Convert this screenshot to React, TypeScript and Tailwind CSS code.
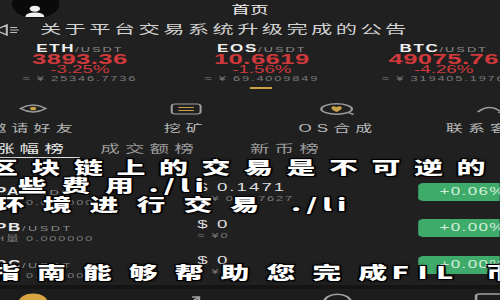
import React from "react";

const tickers = [
  { sym: "ETH", price: "3893.36", pct: "-3.25%", cny: "≈ ¥ 25346.7736" },
  { sym: "EOS", price: "10.6619", pct: "-1.56%", cny: "≈ ¥ 69.4009849" },
  { sym: "BTC", price: "49075.76", pct: "-4.26%", cny: "≈ ¥ 319405.1976" },
];

const rows = [
  { sym: "PA", vol: "H量 0.000000", price: "$ 0.1471", cny: "≈ ¥ 0.957627", chg: "+0.06%" },
  { sym: "PB", vol: "H量 0.000000", price: "$ 0", cny: "≈ ¥0", chg: "+0.00%" },
  { sym: "PC", vol: "H量 0.000000", price: "$ 0", cny: "≈ ¥0", chg: "+0.00%" },
];

function InviteIcon() {
  return (
    <svg width="17" height="11" viewBox="0 0 17 11">
      <path d="M1 5.5 Q8.5 -1.5 16 5.5 Q8.5 12.5 1 5.5 Z" fill="none" stroke="#9a9a9a" strokeWidth="1.2" />
      <circle cx="8.5" cy="5.5" r="1.8" fill="#c9a24a" />
    </svg>
  );
}

function MineIcon() {
  return (
    <svg width="19" height="12" viewBox="0 0 19 12">
      <rect x="1" y="1" width="17" height="10" rx="2" fill="none" stroke="#a0a0a0" strokeWidth="1.2" />
      <path d="M5 4.5h9M5 7.5h9" stroke="#c9a24a" strokeWidth="1.2" />
    </svg>
  );
}

function OsIcon() {
  return (
    <svg width="22" height="12" viewBox="0 0 22 12">
      <ellipse cx="10" cy="6" rx="9" ry="5.2" fill="none" stroke="#9a9a9a" strokeWidth="1.4" />
      <path d="M17 9.5l3 2" stroke="#9a9a9a" strokeWidth="1.4" />
      <path
        d="M10 9C6 6.5 6.5 3 8.4 3.2C9.3 3.3 10 4.2 10 4.2C10 4.2 10.7 3.3 11.6 3.2C13.5 3 14 6.5 10 9Z"
        fill="#c9a24a"
      />
    </svg>
  );
}

function ContactIcon() {
  return (
    <svg width="20" height="12" viewBox="0 0 20 12">
      <path d="M3 9Q10 0 17 9" fill="none" stroke="#9a9a9a" strokeWidth="1.3" />
      <path d="M15 9l2.5 1.5" stroke="#9a9a9a" strokeWidth="1.3" />
    </svg>
  );
}

const menu = [
  { label: "邀请好友", icon: <InviteIcon /> },
  { label: "挖矿", icon: <MineIcon /> },
  { label: "OS合成", icon: <OsIcon /> },
  { label: "联系客服", icon: <ContactIcon /> },
];

export default function App() {
  return (
    <div className="h-[300px] w-[500px] overflow-hidden bg-[#202020]">
      <div className="relative h-[300px] w-[294px] origin-top-left overflow-hidden font-['Liberation_Sans','Noto_Sans_CJK_SC',sans-serif] [transform:scaleX(1.7)]">
        {/* header */}
        <div className="grid h-[20px] grid-cols-[1fr_auto_1fr] items-start overflow-hidden">
          <div className="-mt-[10px] ml-[6.5px] flex h-[28px] w-[28px] items-end justify-center rounded-full bg-[#0a0a0a] pb-[1px]">
            <svg width="13" height="12" viewBox="0 0 14 13">
              <circle cx="7" cy="4" r="3.3" fill="#f2f2f2" />
              <path d="M1 13C1 9 4 8 7 8C10 8 13 9 13 13Z" fill="#f2f2f2" />
            </svg>
          </div>
          <div className="text-[11px] leading-[20px] text-[#eeeeee]">首页</div>
          <div />
        </div>

        {/* notice */}
        <div className="flex h-[20px] items-center overflow-hidden">
          <svg className="-ml-[4px]" width="17" height="12" viewBox="0 0 17 12">
            <path d="M1 4h3l4-3v10l-4-3H1z" fill="none" stroke="#bdbdbd" strokeWidth="1.2" />
            <path d="M10 3.5h4M10 6h5M10 8.5h4" stroke="#bdbdbd" strokeWidth="1.1" />
          </svg>
          <div className="ml-[10.5px] text-[12.5px] leading-[20px] tracking-[2px] text-[#d2d2d2]">
            关于平台交易系统升级完成的公告
          </div>
        </div>

        {/* tickers */}
        <div className="-ml-[6.5px] flex h-[44px] w-[321px] overflow-hidden pt-[1.5px]">
          {tickers.map((t) => (
            <div key={t.sym} className="flex w-[107px] shrink-0 flex-col items-center">
              <div className="h-[10px] leading-[10px] whitespace-nowrap">
                <span className="text-[10px] font-bold tracking-[1px] text-[#f0f0f0]">{t.sym}</span>
                <span className="text-[7.5px] tracking-[1.2px] text-[#8a8a8a]">/USDT</span>
              </div>
              <div className="text-[15px] font-bold leading-[13px] tracking-[0.3px] whitespace-nowrap text-[#d0393b]">
                {t.price}
              </div>
              <div className="-mt-[1px] text-[11px] leading-[11px] text-[#d0393b]">{t.pct}</div>
              <div className="-mt-[1px] text-[7.5px] leading-[9px] tracking-[1.1px] whitespace-nowrap text-[#7a7a7a]">
                {t.cny}
              </div>
            </div>
          ))}
        </div>

        {/* pager */}
        <div className="flex h-[8px] items-center justify-center">
          <span className="h-[2px] w-[13px]" />
          <span className="h-[2px] w-[13px] bg-[#c9a24a]" />
        </div>

        {/* menu */}
        <div className="-ml-[25px] grid h-[46px] w-[358px] grid-cols-4 overflow-hidden">
          {menu.map((m) => (
            <div key={m.label} className="flex flex-col items-center pt-[11px]">
              <div className="flex h-[11px] items-center">{m.icon}</div>
              <div className="mt-[9px] text-[10px] leading-[12px] tracking-[3px] whitespace-nowrap text-[#b8b8b8]">
                {m.label}
              </div>
            </div>
          ))}
        </div>

        {/* tabs */}
        <div className="flex h-[20px] items-start overflow-hidden pt-[4px] text-[11.5px] leading-[14px] tracking-[3px] whitespace-nowrap">
          <div className="-ml-[3px] w-[50px] border-b-[1.5px] border-[#dcdcdc] pb-[1px] text-[#e6e6e6]">涨幅榜</div>
          <div className="ml-[12px] w-[59px] text-[#9a9a9a]">成交额榜</div>
          <div className="ml-[29px] text-[#9a9a9a]">新币榜</div>
        </div>

        {/* list */}
        <div className="pt-[17.5px]">
          {rows.map((r) => (
            <div key={r.sym} className="flex h-[36.5px] items-start overflow-hidden">
              <div className="-ml-[3px] w-[119px] shrink-0 pt-[8px]">
                <div className="leading-[11px] whitespace-nowrap">
                  <span className="text-[10px] font-bold tracking-[1px] text-[#ececec]">{r.sym}</span>
                  <span className="text-[7.5px] tracking-[1.5px] text-[#8a8a8a]">/USDT</span>
                </div>
                <div className="text-[7.5px] leading-[10px] tracking-[1.1px] whitespace-nowrap text-[#7a7a7a]">
                  {r.vol}
                </div>
              </div>
              <div className="w-[129.5px] shrink-0 pt-[5.5px]">
                <div className="text-[11px] leading-[13px] tracking-[1.2px] text-[#dedede]">{r.price}</div>
                <div className="text-[7.5px] leading-[10px] tracking-[1.1px] text-[#7a7a7a]">{r.cny}</div>
              </div>
              <div className="mt-[7px] h-[18px] w-[60px] shrink-0 rounded-[3px] bg-[#3fab6a] pl-[13px] text-[10px] leading-[18px] tracking-[0.8px] text-[#d4efdd]">
                {r.chg}
              </div>
            </div>
          ))}
        </div>

        {/* bottom nav */}
        <div className="-ml-[25px] grid h-[15px] w-[358px] grid-cols-4 overflow-hidden border-t-[4px] border-[#141414] bg-[#1c1c1c]">
          <div className="flex justify-center pt-[4px]">
            <svg width="19" height="18" viewBox="0 0 19 18">
              <circle cx="9.5" cy="9" r="8.5" fill="#d9a441" />
            </svg>
          </div>
          <div className="flex justify-center pt-[4px]">
            <svg width="19" height="18" viewBox="0 0 19 18">
              <path d="M2 14L7 8l4 3 6-7" fill="none" stroke="#a0a0a0" strokeWidth="1.5" />
              <path d="M13 4h4v4" fill="none" stroke="#a0a0a0" strokeWidth="1.5" />
            </svg>
          </div>
          <div className="flex justify-center pt-[4px]">
            <svg width="19" height="18" viewBox="0 0 19 18">
              <circle cx="9.5" cy="9" r="7.8" fill="none" stroke="#a0a0a0" strokeWidth="1.6" />
            </svg>
          </div>
          <div className="flex justify-center pt-[4px]">
            <svg width="19" height="18" viewBox="0 0 19 18">
              <rect x="1" y="1" width="17" height="16" rx="2" fill="none" stroke="#a0a0a0" strokeWidth="1.6" />
            </svg>
          </div>
        </div>

        {/* subtitle overlay */}
        <div className="pointer-events-none absolute left-0 top-[157.5px] font-['Noto_Sans_CJK_SC',sans-serif] text-[17px] font-black leading-[18.5px] whitespace-nowrap text-white [text-shadow:-1px_-1px_0_#000,1px_-1px_0_#000,-1px_1px_0_#000,1px_1px_0_#000,0_0_3px_#000]">
          <div className="-ml-[6.5px] tracking-[8px]">区块链上的交易是不可逆的</div>
          <div className="ml-[10.5px] tracking-[8.6px]">
            些费用<span className="tracking-[3px]">./li</span>
          </div>
          <div className="-ml-[2.5px] tracking-[10.6px]">
            环境进行交易<span className="ml-[8px] tracking-[3px]">./li</span>
          </div>
        </div>
        <div className="pointer-events-none absolute left-[-5.3px] top-[263px] font-['Noto_Sans_CJK_SC',sans-serif] text-[17px] font-black leading-[18.5px] whitespace-nowrap text-white [text-shadow:-1px_-1px_0_#000,1px_-1px_0_#000,-1px_1px_0_#000,1px_1px_0_#000,0_0_3px_#000]">
          <span className="tracking-[10px]">指南能够帮助您完成</span>
          <span className="-ml-[7.4px] tracking-[5px]">FIL</span>
          <span className="ml-[14px]">币</span>
        </div>
      </div>
    </div>
  );
}
